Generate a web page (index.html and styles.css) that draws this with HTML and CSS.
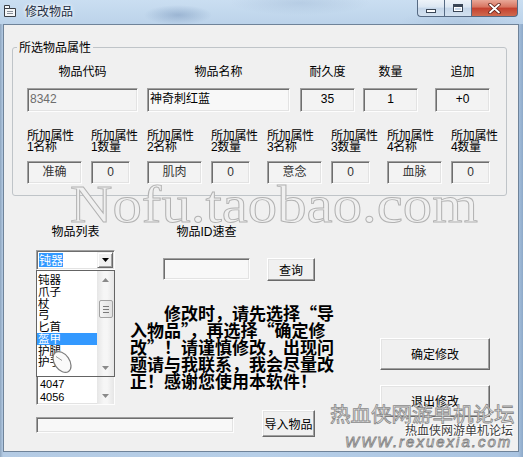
FILE: index.html
```html
<!DOCTYPE html>
<html lang="zh-CN">
<head>
<meta charset="utf-8">
<title>修改物品</title>
<link rel="stylesheet" href="styles.css">
</head>
<body>
<div class="window">
  <div class="titlebar">
    <svg class="appicon" width="12" height="12" viewBox="0 0 12 12"><path d="M0.5 0.5h5v3h6v8h-11z" fill="#f4f6f8" stroke="#3b3f46"/><path d="M0.5 3.5h5" stroke="#3b3f46"/><path d="M3 6.5h6M3 8.5h6" stroke="#8a9099"/></svg>
    <span class="title">修改物品</span>
    <div class="caption">
      <span class="cbtn min"><i class="g-min"></i></span>
      <span class="cbtn max"><i class="g-max"></i></span>
      <span class="cbtn close"><svg width="13" height="11" viewBox="0 0 13 11"><path d="M2 1.5l9 8M11 1.5l-9 8" stroke="#5a1c14" stroke-width="3.4" stroke-linecap="round"/><path d="M2 1.5l9 8M11 1.5l-9 8" stroke="#fff" stroke-width="1.8" stroke-linecap="round"/></svg></span>
    </div>
  </div>

  <div class="client">
    <fieldset class="group">
      <legend>所选物品属性</legend>
      <div class="row1">
        <div class="col w-code"><span class="lbl">物品代码</span><div class="field left dim">8342</div></div>
        <div class="col w-name"><span class="lbl">物品名称</span><div class="field left light">神奇刺红蓝</div></div>
        <div class="col w-dur"><span class="lbl">耐久度</span><div class="field">35</div></div>
        <div class="col w-qty"><span class="lbl">数量</span><div class="field">1</div></div>
        <div class="col w-add"><span class="lbl">追加</span><div class="field">+0</div></div>
      </div>
      <div class="row2">
        <div class="c2"><span class="lbl2">所加属性<br>1名称</span><div class="field gray">准确</div></div>
        <div class="c2 n"><span class="lbl2">所加属性<br>1数量</span><div class="field gray">0</div></div>
        <div class="c2"><span class="lbl2">所加属性<br>2名称</span><div class="field gray">肌肉</div></div>
        <div class="c2 n"><span class="lbl2">所加属性<br>2数量</span><div class="field gray">0</div></div>
        <div class="c2"><span class="lbl2">所加属性<br>3名称</span><div class="field gray">意念</div></div>
        <div class="c2 n"><span class="lbl2">所加属性<br>3数量</span><div class="field gray">0</div></div>
        <div class="c2"><span class="lbl2">所加属性<br>4名称</span><div class="field gray">血脉</div></div>
        <div class="c2 n"><span class="lbl2">所加属性<br>4数量</span><div class="field gray">0</div></div>
      </div>
    </fieldset>

    <div class="watermark">Nofu.taobao.com</div>

    <div class="lower">
      <div class="leftpart">
        <div class="toprow">
          <div class="listcol">
            <div class="lbl">物品列表</div>
            <div class="combo sunken">
              <span class="combo-text"><span class="sel">钝器</span></span>
              <span class="combo-btn"><svg width="7" height="4" viewBox="0 0 7 4"><path d="M0 0h7L3.5 4z" fill="#000"/></svg></span>
              <div class="popup">
                <ul class="pitems">
                  <li>钝器</li>
                  <li>爪子</li>
                  <li>杖</li>
                  <li>弓</li>
                  <li>匕首</li>
                  <li class="on">盔甲</li>
                  <li>护腿</li>
                  <li>护手</li>
                </ul>
                <div class="vs">
                  <span class="arr"><svg width="7" height="4" viewBox="0 0 7 4"><path d="M0 4h7L3.5 0z" fill="#8a8a8a"/></svg></span>
                  <span class="thumb"><i></i><i></i><i></i></span>
                  <span class="track"></span>
                  <span class="arr"><svg width="7" height="4" viewBox="0 0 7 4"><path d="M0 0h7L3.5 4z" fill="#8a8a8a"/></svg></span>
                </div>
              </div>
              <svg class="cursor" width="24" height="30" viewBox="0 0 24 30"><ellipse cx="12" cy="15" rx="7.5" ry="11.5" transform="rotate(-35 12 15)" fill="#fafafa" stroke="#7d7d7d" stroke-width="1.2"/><path d="M6 9.5l6 4" stroke="#9a9a9a" stroke-width="1"/></svg>
            </div>
            <div class="listbox sunken">
              <ul class="litems">
                <li>4001</li>
                <li>4002</li>
                <li>4005</li>
                <li>4011</li>
                <li>4016</li>
                <li>4023</li>
                <li>4030</li>
                <li>4038</li>
                <li>4047</li>
                <li>4056</li>
              </ul>
              <div class="vs">
                <span class="track"></span>
                <span class="arr"><svg width="7" height="4" viewBox="0 0 7 4"><path d="M0 0h7L3.5 4z" fill="#8a8a8a"/></svg></span>
              </div>
            </div>
          </div>
          <div class="midcol">
            <div class="idrow">
              <div class="idfield"><span class="lbl">物品ID速查</span><div class="field idinput"></div></div>
              <button class="btn query">查询</button>
            </div>
            <p class="notice">修改时，请先选择“导<br>入物品”，再选择“确定修<br>改”！请谨慎修改，出现问<br>题请与我联系，我会尽量改<br>正！感谢您使用本软件！</p>
          </div>
        </div>
        <div class="bottomrow">
          <div class="field bottominput"></div>
          <button class="btn import">导入物品</button>
        </div>
      </div>
      <div class="btncol">
        <button class="btn big">确定修改</button>
        <button class="btn big second">退出修改</button>
      </div>
    </div>
  </div>

  <div class="wm-big">热血侠网游单机论坛</div>
  <div class="wm-small">热血侠网游单机论坛</div>
  <div class="wm-url">WWW.rexuexia.com</div>
</div>
</body>
</html>
```
FILE: styles.css
```css
* { box-sizing: border-box; }
html, body { margin: 0; padding: 0; }
body {
  width: 523px;
  height: 457px;
  overflow: hidden;
  font-family: "Liberation Sans", "Noto Sans CJK SC", sans-serif;
  font-size: 12px;
  color: #000;
}
.window {
  position: relative;
  width: 523px;
  height: 457px;
  display: flex;
  flex-direction: column;
  background: linear-gradient(90deg, #8fa6bf 0, #b4cbe4 3px, #b7cfe8 50%, #aac4e1 99%, #8da9c8 100%);
}

/* title bar */
.titlebar {
  height: 24px;
  display: flex;
  align-items: flex-start;
  padding-left: 4px;
  background:
    radial-gradient(ellipse 34px 10px at 178px 15px, rgba(110,140,180,.45), transparent),
    radial-gradient(ellipse 70px 12px at 300px 3px, rgba(150,176,206,.35), transparent),
    radial-gradient(ellipse 60px 12px at 460px 22px, rgba(150,176,206,.3), transparent),
    linear-gradient(#cadef1, #bcd3ea);
}
.appicon { margin-top: 5px; flex: none; }
.title {
  margin-left: 9px;
  margin-top: 5px;
  line-height: 12px;
  font-family: "Noto Sans CJK SC", sans-serif;
  font-size: 12px;
  color: #1c2c42;
  text-shadow: 0 0 5px #fff, 0 0 3px #fff;
}
.caption {
  margin-left: auto;
  margin-right: 5px;
  display: flex;
  height: 17px;
}
.cbtn {
  height: 17px;
  display: flex;
  align-items: center;
  justify-content: center;
  border: 1px solid #566a83;
  border-top: none;
}
.min, .max {
  width: 27px;
  background: linear-gradient(#eef3f9, #dbe6f2 45%, #c5d6e9 50%, #d3e1ef);
}
.min { border-radius: 0 0 0 4px; border-right: none; }
.max { border-right: none; }
.close {
  width: 47px;
  border-radius: 0 0 4px 0;
  background: linear-gradient(#e9a898, #d7735f 45%, #c4402e 50%, #d06a4e);
}
.g-min {
  display: block;
  width: 10px;
  height: 4px;
  margin-top: 5px;
  background: #fff;
  border: 1px solid #3a4656;
}
.g-max {
  display: block;
  width: 10px;
  height: 8px;
  background: transparent;
  border: 1px solid #3a4656;
  border-top-width: 3px;
  box-shadow: inset 0 0 0 1px #fff;
}

/* client */
.client {
  flex: 1;
  position: relative;
  margin: 0 4px 5px 3px;
  background: #f0f0f0;
  border: 1px solid #6f8399;
  display: flex;
  flex-direction: column;
}

.group {
  margin: 16px 0 0 8px;
  width: 495px;
  min-width: 0;
  padding: 0 0 11px 14px;
  border: 1px solid #bfc4c8;
  border-radius: 3px;
}
.group legend {
  margin-left: -10px;
  padding: 0 2px;
  line-height: 12px;
  font-family: "Noto Sans CJK SC", sans-serif;
  font-size: 12px;
}

.field {
  border: 1px solid;
  border-color: #a0a0a0 #fdfdfd #fdfdfd #a0a0a0;
  box-shadow: inset 1px 1px 0 #6e6e6e, inset -1px -1px 0 #e3e3e3;
  background: #f3f3f3;
  display: flex;
  align-items: center;
  justify-content: center;
  line-height: 12px;
  padding-bottom: 2px;
  white-space: nowrap;
  font-family: "Liberation Sans", "Noto Sans CJK SC", sans-serif;
}
.field.left { justify-content: flex-start; padding-left: 2px; }
.field.dim { color: #6d6d6d; }
.field.light { background: #f8f8f8; }
.field.gray { color: #333; }

.row1 { display: flex; margin-top: 13px; }
.col { display: flex; flex-direction: column; align-items: center; }
.col .lbl { line-height: 12px; white-space: nowrap; }
.col .field { margin-top: 10px; height: 24px; width: 100%; }
.w-code { width: 111px; }
.w-name { width: 143px; margin-left: 9px; }
.w-dur { width: 55px; margin-left: 10px; }
.w-qty { width: 55px; margin-left: 8px; }
.w-add { width: 55px; margin-left: 17px; }

.row2 { display: flex; margin-top: 19px; }
.c2 { display: flex; flex-direction: column; width: 55px; }
.c2.n { width: 39px; margin-left: 9px; }
.c2.n + .c2 { margin-left: 17px; }
.lbl2 { line-height: 11px; white-space: nowrap; letter-spacing: -0.3px; }
.c2 .field { margin-top: 8px; height: 23px; }

.watermark {
  position: absolute;
  left: 66px;
  top: 154px;
  font-family: "Liberation Serif", serif;
  font-size: 52px;
  line-height: 52px;
  color: #f0f0f0;
  -webkit-text-stroke: 0.9px #b2b2b2;
  transform: scaleX(1.13);
  transform-origin: 0 0;
  white-space: nowrap;
  pointer-events: none;
}

/* lower area */
.lower { display: flex; padding-left: 32px; }
.leftpart { display: flex; flex-direction: column; }
.toprow { display: flex; align-items: flex-start; }
.listcol { width: 79px; margin-top: 30px; display: flex; flex-direction: column; }
.lbl { line-height: 12px; white-space: nowrap; }
.listcol .lbl { text-align: center; }

.sunken {
  border: 1px solid;
  border-color: #a0a0a0 #fdfdfd #fdfdfd #a0a0a0;
  box-shadow: inset 1px 1px 0 #6e6e6e, inset -1px -1px 0 #e3e3e3;
  background: #fff;
}
.combo {
  margin-top: 12px;
  height: 20px;
  position: relative;
  display: flex;
  align-items: center;
  justify-content: space-between;
  padding: 1px 1px 1px 2px;
}
.combo .sel {
  display: inline-block;
  background: #3399ff;
  color: #fff;
  line-height: 14px;
  font-family: "Noto Sans CJK SC", sans-serif;
}
.combo-btn {
  width: 16px;
  height: 16px;
  background: #f0f0f0;
  border: 1px solid;
  border-color: #f0f0f0 #696969 #696969 #f0f0f0;
  box-shadow: inset 1px 1px 0 #fff, inset -1px -1px 0 #a0a0a0;
  display: flex;
  align-items: center;
  justify-content: center;
}
.popup {
  position: absolute;
  left: -1px;
  top: 19px;
  width: 79px;
  height: 107px;
  display: flex;
  border: 1px solid #646464;
  background: #fff;
  z-index: 5;
}
.pitems {
  flex: 1;
  margin: 0;
  padding: 3px 0 0 0;
  list-style: none;
}
.pitems li {
  height: 11.75px;
  line-height: 11.75px;
  padding-left: 1px;
  font-family: "Noto Sans CJK SC", sans-serif;
  font-size: 11.5px;
  white-space: nowrap;
}
.pitems li.on { background: #3399ff; color: #fff; }
.vs {
  width: 17px;
  display: flex;
  flex-direction: column;
  align-items: center;
  background: linear-gradient(90deg, #e6e6e6, #f6f6f6 40%, #f6f6f6 60%, #e6e6e6);
}
.vs .arr {
  width: 17px;
  height: 17px;
  display: flex;
  align-items: center;
  justify-content: center;
}
.vs .track { flex: 1; }
.vs .thumb {
  margin-top: 12px;
  width: 14px;
  height: 18px;
  border: 1px solid #a2a2a2;
  border-radius: 2px;
  background: linear-gradient(90deg, #f4f4f4, #e2e2e2);
  display: flex;
  flex-direction: column;
  align-items: center;
  justify-content: center;
  gap: 2px;
}
.vs .thumb i {
  display: block;
  width: 6px;
  height: 1px;
  background: #7a7a7a;
}
.cursor {
  position: absolute;
  left: 13px;
  top: 96px;
  z-index: 6;
}
.listbox {
  height: 135px;
  display: flex;
}
.litems {
  flex: 1;
  margin: 0;
  padding: 3px 0 0 3px;
  list-style: none;
  overflow: hidden;
}
.litems li {
  height: 13px;
  line-height: 13px;
  font-size: 11px;
}

.midcol { margin-left: 15px; margin-top: 30px; display: flex; flex-direction: column; }
.idrow { display: flex; align-items: flex-end; }
.idfield { margin-left: 33px; width: 87px; display: flex; flex-direction: column; align-items: center; }
.idinput { margin-top: 20px; height: 22px; width: 87px; background: #f8f8f8; }

.btn {
  font-family: "Noto Sans CJK SC", sans-serif;
  font-size: 12px;
  line-height: 12px;
  color: #000;
  background: #f0f0f0;
  border: 1px solid;
  border-color: #fff #696969 #696969 #fff;
  box-shadow: inset -1px -1px 0 #a0a0a0, inset 1px 1px 0 #e3e3e3;
  padding: 0;
  border-radius: 0;
}
.query { margin-left: 17px; width: 48px; height: 23px; margin-bottom: -1px; }

.notice {
  margin: 24px 0 0;
  font-family: "Noto Sans CJK SC", sans-serif;
  font-weight: 700;
  font-size: 17px;
  line-height: 17px;
  white-space: nowrap;
  text-indent: 2em;
  width: 204px;
}

.bottomrow { display: flex; margin-top: 5px; align-items: flex-start; }
.bottominput { width: 198px; height: 16px; margin-top: 7px; background: #f8f8f8; }
.import { margin-left: 28px; width: 53px; height: 27px; }

.btncol { margin-left: 46px; padding-top: 142px; display: flex; flex-direction: column; }
.big { width: 110px; height: 32px; }
.big.second { margin-top: 15px; }

/* bottom-right watermark */
.wm-big {
  position: absolute;
  left: 330px;
  top: 403px;
  font-family: "Noto Sans CJK SC", sans-serif;
  font-size: 20.5px;
  line-height: 21px;
  color: #ececec;
  -webkit-text-stroke: 0.8px #8a8a8a;
  white-space: nowrap;
  pointer-events: none;
  z-index: 10;
}
.wm-small {
  position: absolute;
  left: 405px;
  top: 424px;
  font-family: "Noto Sans CJK SC", sans-serif;
  font-size: 12px;
  line-height: 12px;
  color: #3c3c3c;
  text-shadow: 0 0 2px #fff, 1px 1px 0 #fff, -1px -1px 0 #fff;
  white-space: nowrap;
  pointer-events: none;
  z-index: 11;
}
.wm-url {
  position: absolute;
  left: 345px;
  top: 434px;
  font-family: "Liberation Sans", sans-serif;
  font-size: 15px;
  line-height: 15px;
  font-style: italic;
  letter-spacing: 2px;
  color: #f2f2f2;
  -webkit-text-stroke: 0.8px #808080;
  white-space: nowrap;
  pointer-events: none;
  z-index: 10;
}
```
